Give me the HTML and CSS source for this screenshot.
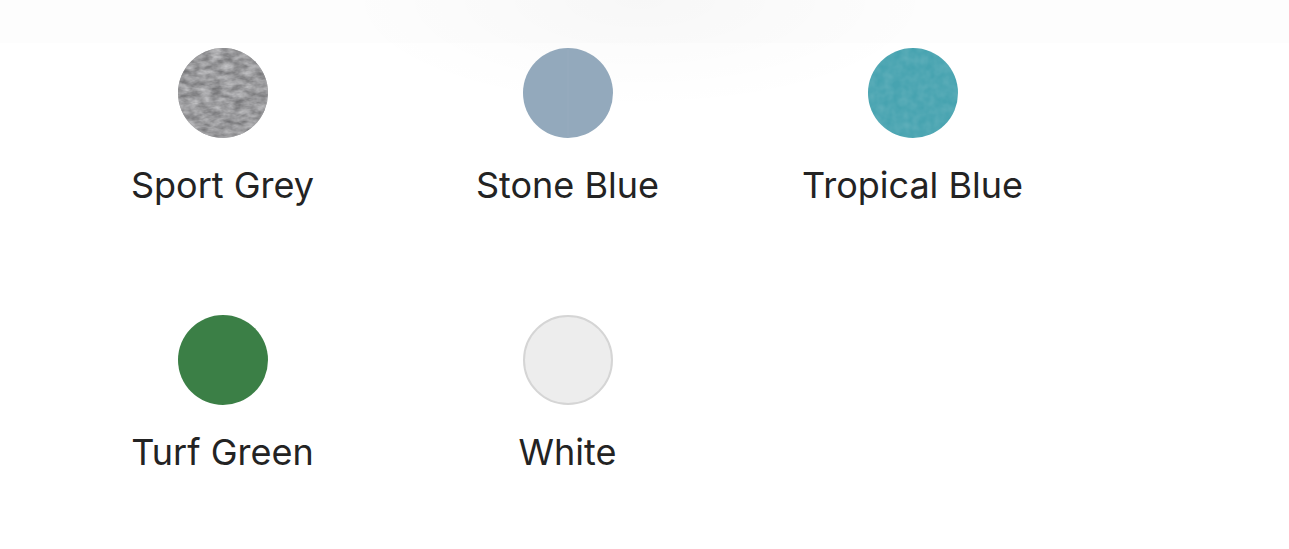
FILE: index.html
```html
<!DOCTYPE html>
<html lang="en">
<head>
<meta charset="utf-8">
<title>Colors</title>
<link rel="stylesheet" href="styles.css">
</head>
<body>
<div class="page">
  <div class="topbar"></div>
  <svg class="defs" width="0" height="0" aria-hidden="true">
    <filter id="heather" x="0" y="0" width="100%" height="100%" color-interpolation-filters="sRGB">
      <feTurbulence type="fractalNoise" baseFrequency="0.09 0.18" numOctaves="3" seed="4" result="n"/>
      <feColorMatrix in="n" type="matrix" values="1 0 0 0 0  1 0 0 0 0  1 0 0 0 0  0 0 0 0 1" result="g"/>
      <feComponentTransfer in="g" result="t">
        <feFuncR type="linear" slope="0.5" intercept="0.36"/>
        <feFuncG type="linear" slope="0.5" intercept="0.36"/>
        <feFuncB type="linear" slope="0.5" intercept="0.37"/>
      </feComponentTransfer>
      <feComposite in="t" in2="SourceGraphic" operator="in"/>
    </filter>
    <filter id="speckle" x="0" y="0" width="100%" height="100%">
      <feTurbulence type="fractalNoise" baseFrequency="0.12" numOctaves="2" seed="9" result="n"/>
      <feColorMatrix in="n" type="matrix" values="0 0 0 0 1  0 0 0 0 1  0 0 0 0 1  0 0 0 -0.6 0.45" result="m"/>
      <feComposite in="m" in2="SourceGraphic" operator="in"/>
    </filter>
  </svg>
  <div class="grid">
    <div class="item">
      <svg class="swatch" viewBox="0 0 90 90"><circle cx="45" cy="45" r="45" fill="#9c9c9e"/><circle cx="45" cy="45" r="45" fill="#9c9c9e" filter="url(#heather)" opacity="0.85"/></svg>
      <div class="label">Sport Grey</div>
    </div>
    <div class="item">
      <svg class="swatch" viewBox="0 0 90 90"><circle cx="45" cy="45" r="45" fill="#93a9bc"/><rect x="44.5" y="0" width="1" height="90" fill="#a0b4c5" opacity="0.35"/></svg>
      <div class="label">Stone Blue</div>
    </div>
    <div class="item">
      <svg class="swatch" viewBox="0 0 90 90"><circle cx="45" cy="45" r="45" fill="#47a3b0"/><circle cx="45" cy="45" r="45" fill="#47a3b0" filter="url(#speckle)" opacity="0.3"/></svg>
      <div class="label">Tropical Blue</div>
    </div>
    <div class="item">
      <svg class="swatch" viewBox="0 0 90 90"><circle cx="45" cy="45" r="45" fill="#3b7f46"/></svg>
      <div class="label">Turf Green</div>
    </div>
    <div class="item">
      <svg class="swatch" viewBox="0 0 90 90"><circle cx="45" cy="45" r="44" fill="#ededed" stroke="#d5d5d5" stroke-width="2"/></svg>
      <div class="label">White</div>
    </div>
  </div>
</div>
</body>
</html>
```

FILE: styles.css
```css
html, body {
  margin: 0;
  padding: 0;
  background: #ffffff;
}

body {
  font-family: Inter, "Noto Sans", "Liberation Sans", sans-serif;
  color: #232323;
}

.page {
  position: relative;
  width: 1289px;
  height: 549px;
  overflow: hidden;
  background:
    radial-gradient(ellipse 300px 110px at 640px 0px, rgba(0, 0, 0, 0.025), rgba(0, 0, 0, 0) 100%),
    #ffffff;
}

.topbar {
  position: absolute;
  left: 0;
  top: 0;
  width: 100%;
  height: 43px;
  background: rgba(0, 0, 0, 0.008);
  pointer-events: none;
}

.defs {
  position: absolute;
}

.grid {
  position: relative;
  display: grid;
  grid-template-columns: repeat(3, 345px);
  grid-auto-rows: 267px;
  padding-left: 50px;
  padding-top: 48px;
}

.item {
  display: flex;
  flex-direction: column;
  align-items: center;
}

.swatch {
  display: block;
  width: 90px;
  height: 90px;
}

.label {
  margin-top: 25px;
  font-size: 36px;
  line-height: 44px;
  font-weight: 400;
  letter-spacing: 0;
  white-space: nowrap;
}
```
